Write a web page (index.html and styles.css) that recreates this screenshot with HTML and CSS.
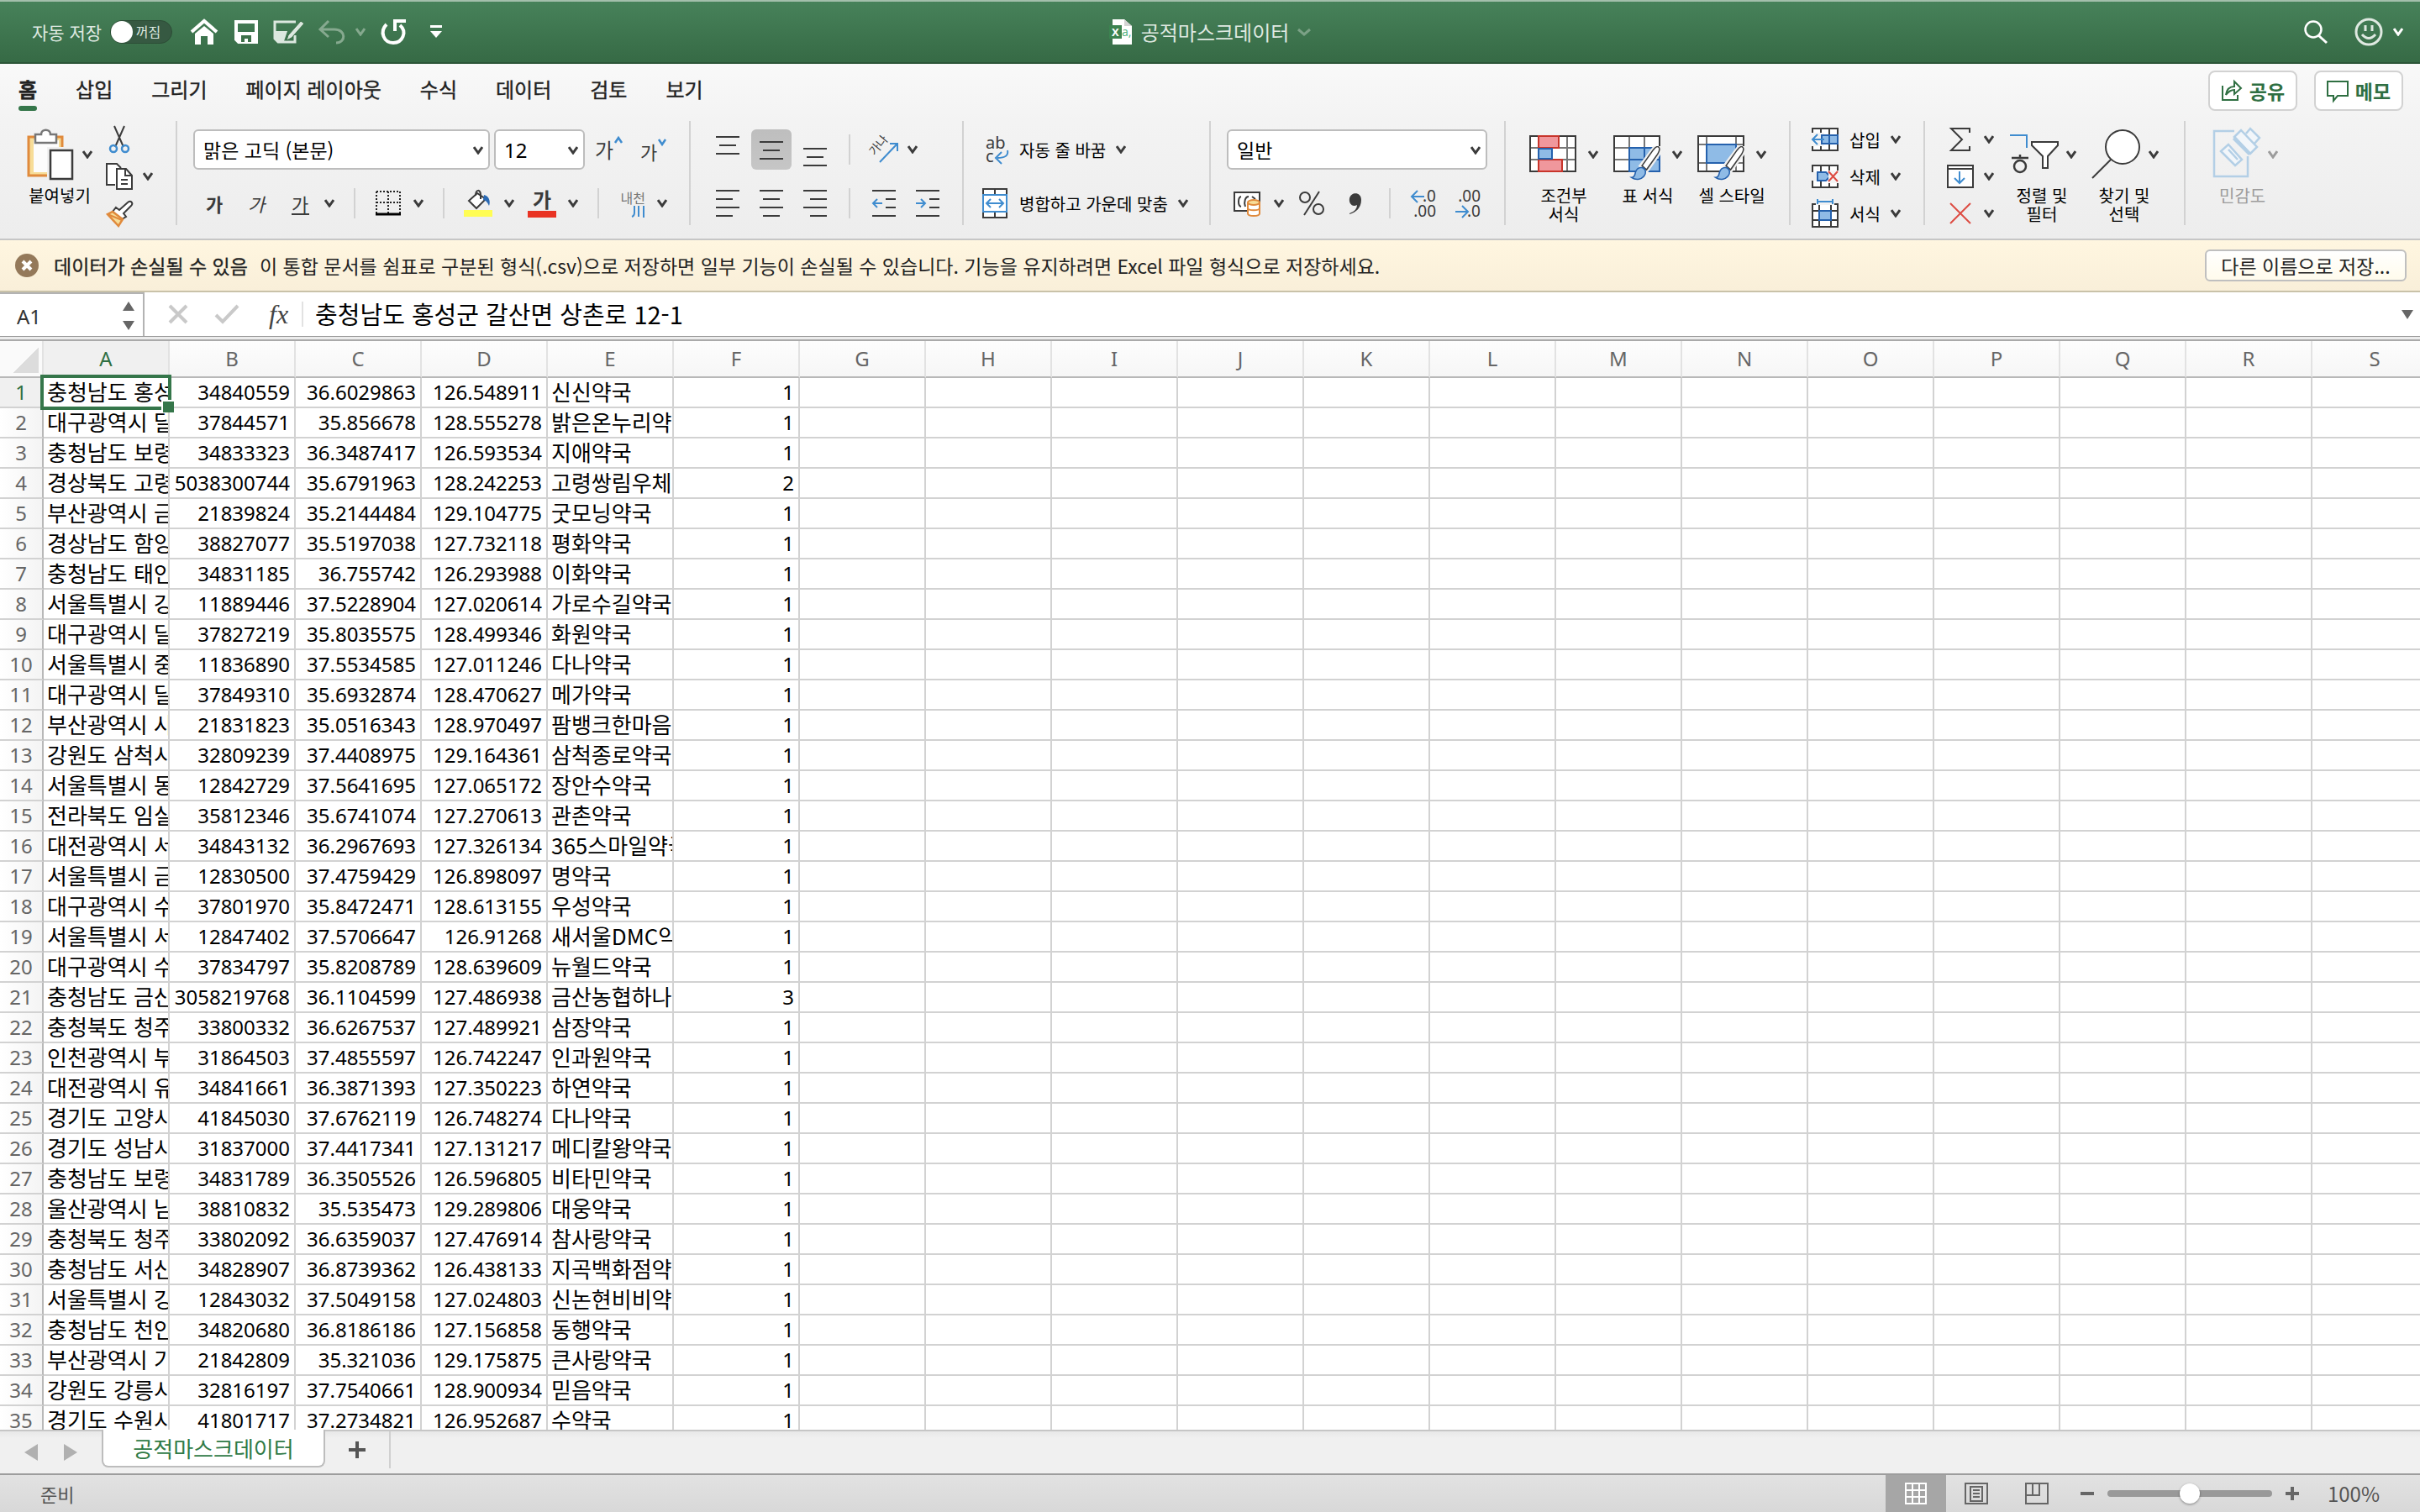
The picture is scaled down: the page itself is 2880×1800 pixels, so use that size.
FILE: index.html
```html
<!DOCTYPE html>
<html lang="ko">

<head>
    <meta charset="UTF-8">
    <meta name="viewport" content="width=device-width, initial-scale=1.0">
    <title>공적마스크데이터</title>
    <link rel="stylesheet" href="styles.css">
</head>

<body>

    <!-- shared icons -->
    <svg class="defs" width="0" height="0">
        <symbol id="caret" viewBox="0 0 12 10"><path d="M1 1 6 8 11 1" fill="none" stroke="currentColor" stroke-width="3"/></symbol>
        <symbol id="brush" viewBox="0 0 46 54">
            <path d="M43 1c4 3 2 7-1 12L25 37l-8-7L35 6c3-4 6-6 8-5z" fill="#fff" stroke="#f1f1f1" stroke-width="7"/>
            <path d="M43 1c3 2 2 6-1 11L25 36l-7-6L35 6c3-4 6-6 8-5z" fill="#fff" stroke="#3b3b3b" stroke-width="2"/>
            <path d="M19 33c5 2 6 8 2 13-5 6-13 6-19 2 5 0 5-4 6-8 2-6 6-8 11-7z" fill="#8fbbe6" stroke="#2561ad" stroke-width="2"/>
        </symbol>
    </svg>

    <header class="titlebar">
        <div class="quick">
            <label for="autosave">자동 저장</label>
            <span class="toggle"><input type="checkbox" id="autosave"><span>꺼짐</span></span>
            <button aria-label="홈"><svg width="32" height="30" viewBox="0 0 32 30"><path d="M1 15 16 2l15 13" fill="none" stroke="#fff" stroke-width="4"/><path d="M5 17 16 8l11 9v13h-7V20h-8v10H5z" fill="#fff"/></svg></button>
            <button aria-label="저장"><svg width="28" height="28" viewBox="0 0 28 28"><path d="M2 2h24v24H5l-3-3z" fill="none" stroke="#fff" stroke-width="4"/><path d="M3 14h22v12H3z" fill="#fff"/><path d="M8 18h12v8h-4v-4h-4v4H8z" fill="#3d7049"/></svg></button>
            <button aria-label="편집 저장"><svg width="38" height="30" viewBox="0 0 38 30"><path d="M27 3H2v20l4 4h20v-8" fill="none" stroke="#dce8df" stroke-width="3"/><path d="M3 14h14l-4 12H6l-3-3z" fill="#dce8df"/><path d="M33 2l4 3-15 17-6 3 2-6z" fill="#dce8df" stroke="#3d7049" stroke-width="1"/></svg></button>
            <button class="faded" aria-label="실행 취소"><svg width="32" height="28" viewBox="0 0 32 28"><path d="M12 1 2 11l10 9M3 11h16c14 0 14 16 2 16" fill="none" stroke="currentColor" stroke-width="3"/></svg><svg class="caret"><use href="#caret"/></svg></button>
            <button aria-label="다시 실행"><svg width="32" height="30" viewBox="0 0 32 30"><path d="M7 6C-2 15 4 28 15 28s17-13 8-21" fill="none" stroke="#fff" stroke-width="4"/><path d="M17 14V2h13" fill="none" stroke="#fff" stroke-width="4"/></svg></button>
            <button aria-label="사용자 지정"><svg width="16" height="16" viewBox="0 0 16 16"><path d="M1 0h14v3H1zM1 7h14l-7 8z" fill="#fff"/></svg></button>
        </div>
        <h1>
            <svg width="28" height="30" viewBox="0 0 28 30"><path d="M4 0h14l9 8v22H4z" fill="#fff"/><path d="M18 0v8h9" fill="#d4d4d4"/><rect y="7" width="15" height="16" fill="#3c8350"/><text x="3" y="20" class="logo-x">X</text><text x="15" y="20" class="logo-a">a,</text></svg>
            공적마스크데이터
            <svg width="16" height="10" viewBox="0 0 16 10"><path d="m1 2 7 6 7-6" fill="none" stroke="#7ba186" stroke-width="3"/></svg>
        </h1>
        <div class="title-tools">
            <button aria-label="검색"><svg width="28" height="28" viewBox="0 0 28 28"><circle cx="11" cy="11" r="9.500" fill="none" stroke="#fff" stroke-width="2.500"/><path d="m17 18 10 9" stroke="#fff" stroke-width="3"/></svg></button>
            <button aria-label="피드백"><svg width="34" height="34" viewBox="0 0 34 34"><circle cx="17" cy="17" r="15" fill="none" stroke="#dfe9e1" stroke-width="3"/><path d="M13 9v7M21 9v7M9 20q8 9 16 0" fill="none" stroke="#dfe9e1" stroke-width="3"/></svg><svg class="caret"><use href="#caret"/></svg></button>
        </div>
    </header>

    <nav class="tabs">
        <a href="#" class="active">홈</a>
        <a href="#">삽입</a>
        <a href="#">그리기</a>
        <a href="#">페이지 레이아웃</a>
        <a href="#">수식</a>
        <a href="#">데이터</a>
        <a href="#">검토</a>
        <a href="#">보기</a>
        <div class="share">
            <button><svg width="26" height="26" viewBox="0 0 26 26"><path d="M2 7v17h18v-6M6 18C7 11 11 8 16 8V2l8 8-8 7v-5c-4 0-7 2-10 6z" fill="none" stroke="#2f6f42" stroke-width="2"/></svg>공유</button>
            <button><svg width="26" height="26" viewBox="0 0 26 26"><path d="M1 2h24v17H13l-5 6v-6H1z" fill="none" stroke="#2f6f42" stroke-width="2"/></svg>메모</button>
        </div>
    </nav>

    <section class="ribbon">
        <div class="group clipboard">
            <button class="big">
                <span class="pic"><svg width="56" height="60" viewBox="0 0 56 60"><path d="M2 9h40v46H2z" fill="#f7dd98" stroke="#e08a3c" stroke-width="3"/><path d="M8 13h30v38H8z" fill="#fcfcfc"/><path d="M10 6h7c0-7 11-7 11 0h7v10H10z" fill="#fff" stroke="#777" stroke-width="2.500"/><path d="M24 21h32v39H24z" fill="#f1f1f1"/><path d="M28 25h26v34H28z" fill="#fff" stroke="#3b3b3b" stroke-width="2.500"/></svg><svg class="caret"><use href="#caret"/></svg></span>
                <span>붙여넣기</span>
            </button>
            <div class="stack">
                <button aria-label="잘라내기"><svg width="32" height="34" viewBox="0 0 32 34"><path d="m10 1 11 25M22 1 11 26" stroke="#3b3b3b" stroke-width="2"/><circle cx="9" cy="28" r="4" fill="none" stroke="#3f8ccf" stroke-width="2.500"/><circle cx="23" cy="28" r="4" fill="none" stroke="#3f8ccf" stroke-width="2.500"/></svg></button>
                <button class="split" aria-label="복사"><svg width="32" height="34" viewBox="0 0 32 34"><path d="M11 27H1V2h12l5 5" fill="#fff" stroke="#3b3b3b" stroke-width="2"/><path d="M13 8h11l7 8v16H13z" fill="#fff" stroke="#3b3b3b" stroke-width="2"/><path d="M23 8v8h8M18 21h8M18 26h8" fill="none" stroke="#3b3b3b" stroke-width="2"/></svg><svg class="caret"><use href="#caret"/></svg></button>
                <button aria-label="서식 복사"><svg width="32" height="32" viewBox="0 0 32 32"><path d="m12 9 4 3L26 3c4-3 7 1 4 4l-9 9 3 4-5 3-11-9z" fill="#fff" stroke="#3b3b3b" stroke-width="2"/><path d="m8 14 12 9-5 8L2 17z" fill="#f7dd98" stroke="#e08a3c" stroke-width="2.500"/><path d="m2 17 17 7" stroke="#e08a3c" stroke-width="2"/></svg></button>
            </div>
        </div>

        <div class="group font">
            <div class="row">
                <span class="dropdown font-name"><select aria-label="글꼴"><option>맑은 고딕 (본문)</option></select><svg class="caret"><use href="#caret"/></svg></span>
                <span class="dropdown font-size"><select aria-label="글꼴 크기"><option>12</option></select><svg class="caret"><use href="#caret"/></svg></span>
                <button class="resize grow" aria-label="글꼴 크게">가<svg class="caret"><path d="M2 8 6 2l4 6" fill="none" stroke="#3f8ccf" stroke-width="2.500"/></svg></button>
                <button class="resize" aria-label="글꼴 작게">가<svg class="caret"><path d="m2 2 4 6 4-6" fill="none" stroke="#3f8ccf" stroke-width="2.500"/></svg></button>
            </div>
            <div class="row">
                <button class="letter bold">가</button>
                <button class="letter italic">가</button>
                <button class="split first"><span class="under">가</span><svg class="caret"><use href="#caret"/></svg></button>
                <i class="sep"></i>
                <button class="split" aria-label="테두리"><svg width="32" height="32" viewBox="0 0 32 32"><path d="M2 2h28M2 15h28M2 2v26M16 2v26M30 2v26" stroke="#222" stroke-width="2" stroke-dasharray="2 2"/><path d="M1 29h30" stroke="#000" stroke-width="3"/></svg><svg class="caret"><use href="#caret"/></svg></button>
                <i class="sep"></i>
                <button class="split" aria-label="채우기 색"><svg width="34" height="34" viewBox="0 0 34 34"><path d="M16 5 6 14l9 9 11-11z" fill="#fff" stroke="#3b3b3b" stroke-width="2"/><path d="M14 8c0-8 6-8 6-1v5" fill="none" stroke="#3b3b3b" stroke-width="2"/><path d="M24 7c6 1 8 8 6 13-2-4-3-6-7-7z" fill="#2a69b3"/><path d="M0 25h34v8H0z" fill="#fffd54"/></svg><svg class="caret"><use href="#caret"/></svg></button>
                <button class="split gap" aria-label="글꼴 색"><span class="colored">가</span><svg class="caret"><use href="#caret"/></svg></button>
                <i class="sep"></i>
                <button class="split" aria-label="윗주"><span class="ruby">내천<svg width="16" height="14" viewBox="0 0 16 14"><path d="M3 0v8q0 4-3 5M8 0v13M14 0v14" fill="none" stroke="#3f8ccf" stroke-width="2"/></svg></span><svg class="caret"><use href="#caret"/></svg></button>
            </div>
        </div>

        <div class="group align">
            <div class="row">
                <button class="tool" aria-label="위쪽"><svg width="28" height="36" viewBox="0 0 28 36"><path d="M0 3h28M4 13h20M0 23h28"/></svg></button>
                <button class="tool pressed" aria-label="가운데"><svg width="28" height="36" viewBox="0 0 28 36"><path d="M0 9h28M4 19h20M0 29h28"/></svg></button>
                <button class="tool" aria-label="아래쪽"><svg width="28" height="36" viewBox="0 0 28 36"><path d="M0 17h28M4 27h20M0 37h28"/></svg></button>
                <i class="sep"></i>
                <button class="tool" aria-label="방향"><svg width="34" height="34" viewBox="0 0 34 34"><text transform="translate(6 25) rotate(-50)" class="tiny">가나</text><path class="blue" d="M12 32 32 11M24 10h9v9"/></svg></button>
                <svg class="caret"><use href="#caret"/></svg>
            </div>
            <div class="row">
                <button class="tool" aria-label="왼쪽 맞춤"><svg width="28" height="32" viewBox="0 0 28 32"><path d="M0 1h28M0 11h20M0 21h28M0 31h20"/></svg></button>
                <button class="tool" aria-label="가운데 맞춤"><svg width="28" height="32" viewBox="0 0 28 32"><path d="M0 1h28M4 11h20M0 21h28M4 31h20"/></svg></button>
                <button class="tool" aria-label="오른쪽 맞춤"><svg width="28" height="32" viewBox="0 0 28 32"><path d="M0 1h28M8 11h20M0 21h28M8 31h20"/></svg></button>
                <i class="sep"></i>
                <button class="tool" aria-label="내어쓰기"><svg width="28" height="32" viewBox="0 0 28 32"><path d="M0 1h28M16 11h12M16 21h12M0 31h28"/><path class="blue" d="M12 16H1M6 11l-5 5 5 5"/></svg></button>
                <button class="tool" aria-label="들여쓰기"><svg width="28" height="32" viewBox="0 0 28 32"><path d="M0 1h28M16 11h12M16 21h12M0 31h28"/><path class="blue" d="M0 16h11M6 11l5 5-5 5"/></svg></button>
            </div>
        </div>

        <div class="group wrap">
            <div class="row">
                <button class="wide"><svg width="34" height="36" viewBox="0 0 34 36"><text x="6" y="17" class="abc">ab</text><text x="6" y="33" class="abc">c</text><path class="blue" d="M32 19q2 9-12 9M25 21l-7 7 7 7"/></svg><span>자동 줄 바꿈</span><svg class="caret"><use href="#caret"/></svg></button>
            </div>
            <div class="row">
                <button class="wide"><svg width="34" height="36" viewBox="0 0 34 36"><path d="M3 1h28v34H3z" fill="#fff" stroke="#3b3b3b" stroke-width="2"/><path d="M17 1v7M17 28v7" stroke="#3b3b3b" stroke-width="2"/><path d="M3 8h28v20H3z" fill="#fff" stroke="#3f8ccf" stroke-width="2"/><path class="blue" d="M7 18h20M12 13l-5 5 5 5M22 13l5 5-5 5"/></svg><span>병합하고 가운데 맞춤</span><svg class="caret"><use href="#caret"/></svg></button>
            </div>
        </div>

        <div class="group number">
            <div class="row">
                <span class="dropdown format"><select aria-label="표시 형식"><option>일반</option></select><svg class="caret"><use href="#caret"/></svg></span>
            </div>
            <div class="row">
                <button class="split money" aria-label="통화"><svg width="34" height="32" viewBox="0 0 34 32"><path d="M1 3h30v22H1z" fill="#fff" stroke="#3b3b3b" stroke-width="2"/><path d="M9 8c-4 1-4 11 0 12M14 20c-2-6 0-12 4-12M22 8l4 3" fill="none" stroke="#3b3b3b" stroke-width="2"/><path d="M17 15v13c0 4 14 4 14 0V15" fill="#fff" stroke="#e08a3c" stroke-width="2"/><ellipse cx="24" cy="15" rx="7" ry="3" fill="#f7dd98" stroke="#e08a3c" stroke-width="2"/><path d="M17 22c1 3 13 3 14 0" fill="none" stroke="#e08a3c" stroke-width="2"/></svg><svg class="caret"><use href="#caret"/></svg></button>
                <button class="tool" aria-label="백분율"><svg width="32" height="30" viewBox="0 0 32 30"><circle cx="8" cy="8" r="6" fill="none"/><circle cx="24" cy="22" r="6" fill="none"/><path d="M25 1 7 29"/></svg></button>
                <button class="tool" aria-label="쉼표"><svg width="16" height="26" viewBox="0 0 16 26"><path d="M1 25q9-3 9-10C4 18 0 13 1 7 3-1 15-1 15 9c0 9-6 15-14 17z" class="solid"/></svg></button>
                <i class="sep"></i>
                <button class="tool" aria-label="자릿수 늘림"><svg width="34" height="36" viewBox="0 0 34 36"><text x="31" y="16" class="digits">.0</text><text x="31" y="34" class="digits">.00</text><path class="blue" d="M17 10H2M9 3l-7 7 7 7"/></svg></button>
                <button class="tool" aria-label="자릿수 줄임"><svg width="34" height="36" viewBox="0 0 34 36"><text x="32" y="16" class="digits">.00</text><text x="32" y="34" class="digits">.0</text><path class="blue" d="M2 28h15M10 21l7 7-7 7"/></svg></button>
            </div>
        </div>

        <div class="group styles">
            <button class="big">
                <span class="pic"><svg width="62" height="60" viewBox="0 0 62 60"><path d="M1 8h54v42H1z" fill="#fff"/><path d="M1 22h54M1 36h54M11 8v42M45 8v42" stroke="#777" stroke-width="2"/><path d="M1 8h54v42H1z" fill="none" stroke="#3b3b3b" stroke-width="2"/><path d="M11 8h24v14H11zM11 36h28v14H11z" fill="#f0979c" stroke="#c8352b" stroke-width="2"/><path d="M11 23h16v12H11z" fill="#8fbbe6" stroke="#2561ad" stroke-width="2"/></svg><svg class="caret"><use href="#caret"/></svg></span>
                <span>조건부<br>서식</span>
            </button>
            <button class="big">
                <span class="pic"><svg width="62" height="60" viewBox="0 0 62 60"><path d="M1 8h54v42H1z" fill="#fff"/><path d="M19 22h36v28H19z" fill="#8fbbe6"/><path d="M1 22h18M1 36h18M19 8v14M37 8v14" stroke="#777" stroke-width="2"/><path d="M55 22V8H1v42h18" fill="none" stroke="#3b3b3b" stroke-width="2"/><path d="M19 22h36v28H19zM19 36h36M37 22v28" fill="none" stroke="#2561ad" stroke-width="2"/><use href="#brush" x="15" y="20" width="46" height="42"/></svg><svg class="caret"><use href="#caret"/></svg></span>
                <span>표 서식</span>
            </button>
            <button class="big">
                <span class="pic"><svg width="62" height="60" viewBox="0 0 62 60"><path d="M1 8h54v42H1z" fill="#fff"/><path d="M1 18h54M1 40h54M11 8v42M46 8v42" stroke="#777" stroke-width="2"/><path d="M1 8h54v42H1z" fill="none" stroke="#3b3b3b" stroke-width="2"/><path d="M11 18h35v22H11z" fill="#8fbbe6" stroke="#2561ad" stroke-width="2"/><use href="#brush" x="15" y="20" width="46" height="42"/></svg><svg class="caret"><use href="#caret"/></svg></span>
                <span>셀 스타일</span>
            </button>
        </div>

        <div class="group cells">
            <button class="wide"><svg width="34" height="30" viewBox="0 0 34 30"><path d="M2 2h30v26H2zM2 10h30M2 20h30M12 2v26M22 2v26" fill="#fff" stroke="#3b3b3b" stroke-width="2"/><path d="M0 7h16v16H0z" fill="#f4f4f4"/><path d="M13 10h19v10H13zM22 10v10" fill="#8fbbe6" stroke="#2561ad" stroke-width="2"/><path class="blue" d="M16 15H2M8 9l-6 6 6 6"/></svg><span>삽입</span><svg class="caret"><use href="#caret"/></svg></button>
            <button class="wide"><svg width="34" height="30" viewBox="0 0 34 30"><path d="M2 10V2h30v8M2 20v8h30v-8M12 2v26M22 2v26" fill="#fff" stroke="#3b3b3b" stroke-width="2"/><path d="M8 10h10l5 5-5 5H8z" fill="#8fbbe6" stroke="#2561ad" stroke-width="2"/><path d="M21 8h13v15H21z" fill="#f4f4f4"/><path d="m21 9 11 12M32 9 21 21" stroke="#dd4b42" stroke-width="2"/></svg><span>삭제</span><svg class="caret"><use href="#caret"/></svg></button>
            <button class="wide"><svg width="34" height="34" viewBox="0 0 34 34"><path d="M2 6h30v27H2zM2 14h30M2 25h30M10 6v27M24 6v27" fill="#fff" stroke="#3b3b3b" stroke-width="2"/><path d="M6 0h22v7H6z" fill="#f2f2f2"/><path d="M10 14h14v11H10z" fill="#8fbbe6" stroke="#2561ad" stroke-width="2"/><path class="blue" d="M8 3h18M8 0v6M26 0v6"/></svg><span>서식</span><svg class="caret"><use href="#caret"/></svg></button>
        </div>

        <div class="group editing">
            <div class="stack">
                <button class="split" aria-label="합계"><svg width="32" height="30" viewBox="0 0 32 30"><path d="M27 7V2H5l13 13L5 28h22v-5" fill="none" stroke="#3b3b3b" stroke-width="2"/></svg><svg class="caret"><use href="#caret"/></svg></button>
                <button class="split" aria-label="채우기"><svg width="32" height="30" viewBox="0 0 32 30"><path d="M1 2h30v26H1zM1 6h30" fill="#fff" stroke="#3b3b3b" stroke-width="2"/><path class="blue" d="M15 9v14M9 17l6 6 6-6"/></svg><svg class="caret"><use href="#caret"/></svg></button>
                <button class="split" aria-label="지우기"><svg width="32" height="30" viewBox="0 0 32 30"><path d="m4 3 24 24M28 3 4 27" stroke="#dd4b42" stroke-width="2"/></svg><svg class="caret"><use href="#caret"/></svg></button>
            </div>
            <button class="big">
                <span class="pic"><svg width="62" height="60" viewBox="0 0 62 60"><path class="blue" d="M3 7h20v15"/><path d="M5 34h20M15 30v4" stroke="#3b3b3b" stroke-width="2.500"/><circle cx="15" cy="44" r="7" fill="none" stroke="#3b3b3b" stroke-width="2.500"/><path d="M29 15h31v4L48 32v14h-6V32L29 19z" fill="#fff" stroke="#3b3b3b" stroke-width="2"/></svg><svg class="caret"><use href="#caret"/></svg></span>
                <span>정렬 및<br>필터</span>
            </button>
            <button class="big">
                <span class="pic"><svg width="62" height="60" viewBox="0 0 62 60"><circle cx="39" cy="21" r="20" fill="#fff" stroke="#3b3b3b" stroke-width="2"/><path d="M25 36 3 58" stroke="#3b3b3b" stroke-width="2"/></svg><svg class="caret"><use href="#caret"/></svg></span>
                <span>찾기 및<br>선택</span>
            </button>
        </div>

        <div class="group sensitivity">
            <button class="big" disabled>
                <span class="pic"><svg width="58" height="60" viewBox="0 0 58 60"><path d="M26 2H2v54h40V32" fill="none" stroke="#b3cfe6" stroke-width="2.500"/><path d="M19 18 35 36 27 43 10 26zM19 24 30 36M26 9l8-8 19 20-8 8zM40 5l5-6 11 11-7 8" fill="#f2f6fa" stroke="#b3cfe6" stroke-width="2.500"/><path d="m24 12 19 19 3-3-19-20z" fill="#b3cfe6"/></svg><svg class="caret"><use href="#caret"/></svg></span>
                <span>민감도</span>
            </button>
        </div>
    </section>

    <div class="message">
        <button class="close" aria-label="닫기"><svg width="28" height="28" viewBox="0 0 28 28"><circle cx="14" cy="14" r="14" fill="#94795a"/><path d="m9 9 10 10M19 9 9 19" stroke="#fff" stroke-width="4"/></svg></button>
        <strong>데이터가 손실될 수 있음</strong>
        <span>이 통합 문서를 쉼표로 구분된 형식(.csv)으로 저장하면 일부 기능이 손실될 수 있습니다. 기능을 유지하려면 Excel 파일 형식으로 저장하세요.</span>
        <button class="save-as">다른 이름으로 저장...</button>
    </div>

    <div class="formula">
        <div class="namebox">
            <input type="text" value="A1" aria-label="이름 상자">
            <svg width="14" height="34" viewBox="0 0 14 34"><path d="M7 0 14 11H0zM7 34 0 23h14z" fill="#666"/></svg>
        </div>
        <button aria-label="취소"><svg width="24" height="24" viewBox="0 0 24 24"><path d="m2 2 20 20M22 2 2 22" stroke="#c9c9c9" stroke-width="4"/></svg></button>
        <button aria-label="입력"><svg width="30" height="24" viewBox="0 0 30 24"><path d="m2 13 8 8L28 2" fill="none" stroke="#c9c9c9" stroke-width="4"/></svg></button>
        <button class="fx">fx</button>
        <input class="content" type="text" value="충청남도 홍성군 갈산면 상촌로 12-1" aria-label="수식">
        <svg width="14" height="11" viewBox="0 0 14 11"><path d="M0 0h14L7 11z" fill="#666"/></svg>
    </div>
    <div class="splitter"></div>

    <main class="grid">
        <table>
            <thead><tr id="columns"><th class="corner"></th></tr></thead>
            <tbody id="rows"></tbody>
        </table>
    </main>

    <div class="sheets">
        <button class="arrow" aria-label="이전 시트"><svg width="16" height="20" viewBox="0 0 16 20"><path d="M16 0v20L0 10z" fill="#b0b0b0"/></svg></button>
        <button class="arrow" aria-label="다음 시트"><svg width="16" height="20" viewBox="0 0 16 20"><path d="M0 0v20l16-10z" fill="#b0b0b0"/></svg></button>
        <button class="sheet">공적마스크데이터</button>
        <button class="add" aria-label="시트 추가"><svg width="22" height="22" viewBox="0 0 22 22"><path d="M11 1v20M1 11h20" stroke="#555" stroke-width="4"/></svg></button>
    </div>

    <footer class="status">
        <span class="ready">준비</span>
        <button class="view current" aria-label="기본 보기"><svg width="28" height="28" viewBox="0 0 28 28"><path d="M2 2h24v24H2zM2 10h24M2 18h24M10 2v24M18 2v24" fill="none" stroke="#fff" stroke-width="2"/></svg></button>
        <button class="view" aria-label="페이지 레이아웃 보기"><svg width="28" height="28" viewBox="0 0 28 28"><path d="M1 2h26v24H1zM7 6h14v17H7z" fill="none" stroke="#666" stroke-width="2"/><path d="M10 10h8M10 14h8M10 18h8" stroke="#666" stroke-width="2"/></svg></button>
        <button class="view" aria-label="페이지 나누기 보기"><svg width="28" height="28" viewBox="0 0 28 28"><path d="M1 2h26v24H1zM1 16h16V2M9 2v14" fill="none" stroke="#666" stroke-width="2"/></svg></button>
        <button class="zoom-btn" aria-label="축소"><svg width="16" height="16" viewBox="0 0 16 16"><path d="M0 8h16" stroke="#666" stroke-width="4"/></svg></button>
        <input type="range" min="0" max="200" value="100" aria-label="확대/축소">
        <button class="zoom-btn" aria-label="확대"><svg width="16" height="16" viewBox="0 0 16 16"><path d="M0 8h16M8 0v16" stroke="#666" stroke-width="4"/></svg></button>
        <span class="percent">100%</span>
    </footer>

    <script>
        const columns = "ABCDEFGHIJKLMNOPQRS".split("");

        const data = [
            ["충청남도 홍성군 갈산면 상촌로 12-1", "34840559", "36.6029863", "126.548911", "신신약국", "1"],
            ["대구광역시 달서구", "37844571", "35.856678", "128.555278", "밝은온누리약국", "1"],
            ["충청남도 보령시", "34833323", "36.3487417", "126.593534", "지애약국", "1"],
            ["경상북도 고령군", "5038300744", "35.6791963", "128.242253", "고령쌍림우체국", "2"],
            ["부산광역시 금정구", "21839824", "35.2144484", "129.104775", "굿모닝약국", "1"],
            ["경상남도 함양군", "38827077", "35.5197038", "127.732118", "평화약국", "1"],
            ["충청남도 태안군", "34831185", "36.755742", "126.293988", "이화약국", "1"],
            ["서울특별시 강남구", "11889446", "37.5228904", "127.020614", "가로수길약국", "1"],
            ["대구광역시 달서구", "37827219", "35.8035575", "128.499346", "화원약국", "1"],
            ["서울특별시 중구", "11836890", "37.5534585", "127.011246", "다나약국", "1"],
            ["대구광역시 달성군", "37849310", "35.6932874", "128.470627", "메가약국", "1"],
            ["부산광역시 사하구", "21831823", "35.0516343", "128.970497", "팜뱅크한마음약국", "1"],
            ["강원도 삼척시", "32809239", "37.4408975", "129.164361", "삼척종로약국", "1"],
            ["서울특별시 동대문구", "12842729", "37.5641695", "127.065172", "장안수약국", "1"],
            ["전라북도 임실군", "35812346", "35.6741074", "127.270613", "관촌약국", "1"],
            ["대전광역시 서구", "34843132", "36.2967693", "127.326134", "365스마일약국", "1"],
            ["서울특별시 금천구", "12830500", "37.4759429", "126.898097", "명약국", "1"],
            ["대구광역시 수성구", "37801970", "35.8472471", "128.613155", "우성약국", "1"],
            ["서울특별시 서대문구", "12847402", "37.5706647", "126.91268", "새서울DMC약국", "1"],
            ["대구광역시 수성구", "37834797", "35.8208789", "128.639609", "뉴월드약국", "1"],
            ["충청남도 금산군", "3058219768", "36.1104599", "127.486938", "금산농협하나로마트", "3"],
            ["충청북도 청주시", "33800332", "36.6267537", "127.489921", "삼장약국", "1"],
            ["인천광역시 부평구", "31864503", "37.4855597", "126.742247", "인과원약국", "1"],
            ["대전광역시 유성구", "34841661", "36.3871393", "127.350223", "하연약국", "1"],
            ["경기도 고양시", "41845030", "37.6762119", "126.748274", "다나약국", "1"],
            ["경기도 성남시", "31837000", "37.4417341", "127.131217", "메디칼왕약국", "1"],
            ["충청남도 보령시", "34831789", "36.3505526", "126.596805", "비타민약국", "1"],
            ["울산광역시 남구", "38810832", "35.535473", "129.289806", "대웅약국", "1"],
            ["충청북도 청주시", "33802092", "36.6359037", "127.476914", "참사랑약국", "1"],
            ["충청남도 서산시", "34828907", "36.8739362", "126.438133", "지곡백화점약국", "1"],
            ["서울특별시 강남구", "12843032", "37.5049158", "127.024803", "신논현비비약국", "1"],
            ["충청남도 천안시", "34820680", "36.8186186", "127.156858", "동행약국", "1"],
            ["부산광역시 기장군", "21842809", "35.321036", "129.175875", "큰사랑약국", "1"],
            ["강원도 강릉시", "32816197", "37.7540661", "128.900934", "믿음약국", "1"],
            ["경기도 수원시", "41801717", "37.2734821", "126.952687", "수약국", "1"]
        ];

        columns.forEach((name, i) => {
            const th = document.createElement("th");
            th.textContent = name;
            if (i === 0) th.className = "on";
            document.getElementById("columns").appendChild(th);
        });

        data.forEach((values, r) => {
            const tr = document.createElement("tr");
            const head = document.createElement("th");
            head.textContent = r + 1;
            if (r === 0) head.className = "on";
            tr.appendChild(head);
            columns.forEach((name, c) => {
                const td = document.createElement("td");
                if (values[c]) {
                    const text = document.createElement("div");
                    text.textContent = values[c];
                    text.className = c === 0 || c === 4 ? "text" : "num";
                    td.appendChild(text);
                }
                if (r === 0 && c === 0) td.className = "selected";
                tr.appendChild(td);
            });
            document.getElementById("rows").appendChild(tr);
        });
    </script>

</body>

</html>
```
FILE: styles.css
```css
* {
    box-sizing: border-box;
}

body {
    margin: 0;
    height: 100vh;
    display: flex;
    flex-direction: column;
    overflow: hidden;
    font-family: "Noto Sans CJK KR", sans-serif;
    font-size: 20px;
    color: #000;
    background: #fff;
}

button {
    display: flex;
    align-items: center;
    justify-content: center;
    padding: 0;
    border: 0;
    background: none;
    color: inherit;
    font: inherit;
    white-space: nowrap;
}

input,
select {
    font: inherit;
    color: inherit;
    margin: 0;
}

svg {
    display: block;
    flex: none;
    overflow: visible;
}

.defs {
    position: absolute;
}

.caret {
    width: 12px;
    height: 10px;
    color: #3b3b3b;
}

/* title bar */
.titlebar {
    display: grid;
    grid-template-columns: 1fr auto 1fr;
    align-items: center;
    height: 76px;
    padding: 0 20px;
    border-top: 2px solid #a3bfab;
    border-bottom: 2px solid #2c5538;
    background: linear-gradient(#47825a, #366a45);
    color: #dfe9e1;
}

.titlebar .caret {
    color: #fff;
}

.quick {
    display: flex;
    align-items: center;
    gap: 26px;
    padding-left: 18px;
    font-size: 21px;
}

.quick label {
    margin-right: -16px;
}

.toggle {
    position: relative;
    display: flex;
    margin-right: -4px;
}

.toggle input {
    appearance: none;
    width: 74px;
    height: 28px;
    border-radius: 14px;
    background: #365942;
    border: 1px solid #2c4d36;
}

.toggle input::before {
    content: "";
    display: block;
    width: 26px;
    height: 26px;
    border-radius: 50%;
    background: #fff;
}

.toggle span {
    position: absolute;
    right: 14px;
    top: 0;
    font-size: 16px;
    line-height: 26px;
    pointer-events: none;
}

.quick button {
    gap: 12px;
}

.faded,
.quick .faded .caret {
    color: #86a98f;
}

.quick button:nth-of-type(2) {
    margin-left: -6px;
}

.quick button:nth-of-type(3),
.quick button:nth-of-type(5) {
    margin-left: -8px;
}

.quick button:nth-of-type(4) {
    margin-left: -10px;
}

.titlebar h1 {
    display: flex;
    align-items: center;
    gap: 10px;
    margin: 0;
    font-size: 24px;
    font-weight: normal;
    line-height: 36px;
}

.logo-x {
    font: bold 13px "Noto Sans", sans-serif;
    fill: #fff;
}

.logo-a {
    font: 14px "Noto Sans", sans-serif;
    fill: #55b584;
}

.title-tools {
    display: flex;
    justify-content: flex-end;
    gap: 32px;
}

.title-tools button {
    gap: 12px;
}

/* ribbon tabs */
.tabs {
    display: flex;
    align-items: flex-start;
    gap: 46px;
    height: 68px;
    padding: 8px 20px 0 22px;
    background: linear-gradient(#f9f9f9, #f3f3f3);
    font-size: 24px;
}

.tabs a {
    padding-top: 4px;
    color: #222;
    text-decoration: none;
    line-height: 36px;
    -webkit-text-stroke: 0.4px #222;
}

.tabs a.active {
    font-weight: bold;
}

.tabs a.active::after {
    content: "";
    display: block;
    height: 6px;
    margin-top: 2px;
    border-radius: 3px;
    background: #35764a;
}

.share {
    display: flex;
    gap: 20px;
    margin-left: auto;
}

.share button {
    gap: 8px;
    width: 106px;
    height: 48px;
    border: 2px solid #d2d2d2;
    border-radius: 8px;
    background: #fff;
    color: #2f6f42;
    font-weight: bold;
    font-size: 23px;
}

/* ribbon */
.ribbon {
    display: flex;
    height: 142px;
    padding-bottom: 16px;
    border-bottom: 2px solid #c6c6c6;
    background: linear-gradient(#f3f3f3, #ededed);
}

.group {
    display: flex;
    flex-direction: column;
    flex: none;
    gap: 16px;
    padding-top: 10px;
    border-right: 2px solid #d2d2d2;
}

.row {
    display: flex;
    align-items: center;
    height: 48px;
}

.sep {
    width: 2px;
    height: 36px;
    margin: 0 23px;
    background: #d2d2d2;
}

.split {
    gap: 14px;
}

.stack {
    display: flex;
    flex-direction: column;
    align-items: flex-start;
    margin-top: -10px;
}

.stack button {
    flex: none;
    height: 44px;
}

.big {
    flex-direction: column;
    justify-content: flex-start;
    line-height: 22px;
}

.big .pic {
    display: flex;
    align-items: center;
    gap: 8px;
    height: 60px;
    margin-bottom: 8px;
}

.wide {
    gap: 12px;
}

.clipboard {
    flex-direction: row;
    gap: 16px;
    width: 211px;
    padding-left: 32px;
}

.clipboard .big .pic {
    gap: 10px;
}

.clipboard .stack .split {
    gap: 12px;
}

.font {
    width: 611px;
    padding-left: 19px;
}

.dropdown {
    position: relative;
    display: block;
    height: 48px;
}

.dropdown select {
    appearance: none;
    width: 100%;
    height: 48px;
    padding: 0 10px;
    border: 2px solid #bdbdbd;
    border-radius: 6px;
    background: #fff;
    font-size: 23px;
}

.dropdown .caret {
    position: absolute;
    right: 8px;
    top: 20px;
}

.font-name {
    width: 353px;
    margin-right: 5px;
}

.font-size {
    width: 108px;
}

.font-size select {
    font-family: "Noto Sans", sans-serif;
    font-size: 24px;
}

.resize {
    align-items: flex-start;
    margin-left: 12px;
    padding-top: 4px;
    font-size: 22px;
    line-height: 32px;
    color: #3b3b3b;
}

.resize.grow {
    padding-top: 0;
    font-size: 24px;
    margin-right: 8px;
}

.letter {
    width: 50px;
    height: 48px;
    font-size: 22px;
    color: #3b3b3b;
}

.bold {
    font-weight: bold;
}

.italic {
    font-style: italic;
}

.first {
    margin-left: 12px;
}

.under {
    width: 30px;
    text-align: center;
    font-size: 22px;
    line-height: 28px;
    color: #3b3b3b;
    background: linear-gradient(#3b3b3b, #3b3b3b) center bottom / 21px 2px no-repeat;
}

.gap {
    margin-left: 16px;
}

.colored {
    width: 34px;
    padding-bottom: 2px;
    border-bottom: 8px solid #e93323;
    font-size: 24px;
    font-weight: bold;
    line-height: 24px;
    color: #3b3b3b;
}

.ruby {
    display: flex;
    flex-direction: column;
    align-items: flex-end;
    width: 32px;
    font-size: 16px;
    line-height: 20px;
    color: #777;
}

.align {
    width: 325px;
    padding-left: 20px;
}

.align .row,
.number .row {
    gap: 4px;
}

.align .sep,
.number .sep {
    margin: 0 12px;
}

.tool {
    width: 48px;
    height: 48px;
}

.tool svg {
    fill: none;
    stroke: #3b3b3b;
    stroke-width: 2px;
}

.tool text {
    fill: #3b3b3b;
    stroke: none;
}

.tool .solid {
    fill: #3b3b3b;
    stroke: none;
}

.blue {
    fill: none;
    stroke: #3f8ccf;
    stroke-width: 2px;
}

.pressed {
    border-radius: 6px;
    background: linear-gradient(#bebebe, #c6c6c6);
}

.tiny {
    font-size: 14px;
}

.abc {
    font: 20px "Noto Sans", sans-serif;
    fill: #3b3b3b;
}

.digits {
    font: 19px "Noto Sans", sans-serif;
    text-anchor: end;
}

.wrap {
    width: 294px;
    padding-left: 20px;
}

.number {
    width: 351px;
    padding-left: 19px;
}

.format {
    width: 310px;
}

.money {
    margin: 0 5px 0 8px;
}

.styles,
.editing {
    flex-direction: row;
}

.styles {
    gap: 18px;
    width: 339px;
    padding-left: 28px;
}

.cells {
    gap: 0;
    width: 160px;
    padding: 0 0 0 24px;
}

.cells .wide {
    flex: none;
    height: 44px;
    justify-content: flex-start;
}

.editing {
    gap: 16px;
    width: 310px;
    padding-left: 26px;
}

.editing .stack .split {
    gap: 12px;
}

.sensitivity {
    border: 0;
    padding-left: 32px;
}

.sensitivity .big {
    align-items: flex-start;
}

.sensitivity .big,
.sensitivity .caret {
    color: #9c9c9c;
}

.sensitivity .big > span:last-child {
    padding-left: 8px;
}

/* message bar */
.message {
    display: flex;
    align-items: center;
    height: 62px;
    padding: 0 16px 0 18px;
    border-bottom: 2px solid #c9c2a9;
    background: linear-gradient(#fff6e0, #f9efd9);
    font-size: 23px;
    line-height: 32px;
    color: #222;
    white-space: nowrap;
}

.message strong {
    margin: 0 14px 0 18px;
    font-weight: normal;
    -webkit-text-stroke: 0.3px #222;
}

.save-as {
    width: 240px;
    height: 38px;
    margin-left: auto;
    border: 2px solid #bfbfbf;
    border-radius: 6px;
    background: linear-gradient(#fff, #fffbec);
}

/* formula bar */
.formula {
    display: flex;
    align-items: center;
    height: 52px;
    padding-right: 8px;
}

.namebox {
    display: flex;
    align-items: center;
    justify-content: space-between;
    width: 172px;
    height: 52px;
    padding: 2px 10px 0 20px;
    margin-right: 28px;
    border: solid #b3b3b3;
    border-width: 2px 2px 0 0;
}

.namebox input {
    width: 100px;
    padding: 0;
    border: 0;
    font-family: "Noto Sans", sans-serif;
    font-size: 24px;
    color: #333;
}

.formula button {
    margin-right: 31px;
}

.formula .fx {
    padding: 0 16px 0 4px;
    margin-right: 0;
    border-right: 2px solid #e2e2e2;
    font: italic 32px/30px "Liberation Serif", serif;
    color: #444;
}

.formula .content {
    flex: 1;
    height: 40px;
    padding: 0 0 2px 14px;
    border: 0;
    font-size: 29px;
}

.splitter {
    height: 6px;
    border-top: 1px solid #999;
    border-bottom: 2px solid #aaa;
    background: #ececec;
}

/* cells */
.grid {
    flex: 1;
    min-height: 0;
    overflow: hidden;
    border-bottom: 2px solid #c6c6c6;
}

table {
    width: 2902px;
    table-layout: fixed;
    border-collapse: separate;
    border-spacing: 0;
    font-family: "Noto Sans", sans-serif;
    font-size: 24px;
}

th,
td {
    height: 36px;
    padding: 0;
    border: solid #d2d2d2;
    border-width: 0 2px 2px 0;
    line-height: 34px;
}

th {
    font-weight: normal;
    color: #666;
}

thead th {
    width: 150px;
    height: 44px;
    line-height: 42px;
    border-color: #e2e2e2;
    border-bottom-color: #b8b8b8;
    background: linear-gradient(#fdfdfd, #f6f6f6);
}

thead .corner {
    width: 52px;
    background: linear-gradient(to bottom right, transparent 50%, #dcdcdc 50%) 16px 8px / 30px 30px no-repeat, #fafafa;
}

tbody th {
    border-right-color: #b8b8b8;
    background: linear-gradient(to right, #fff, #f4f4f4);
}

th.on {
    color: #2f6f42;
    background: #f0f0f0;
}

td div {
    height: 34px;
    overflow: hidden;
    white-space: nowrap;
}

.text {
    padding-left: 4px;
    font-family: "Noto Sans CJK KR", sans-serif;
    font-size: 26px;
    line-height: 32px;
}

.num {
    padding-right: 5px;
    text-align: right;
}

.selected {
    position: relative;
}

.selected::before {
    content: "";
    position: absolute;
    inset: -4px;
    border: 4px solid #35764a;
}

.selected::after {
    content: "";
    position: absolute;
    right: -7px;
    bottom: -7px;
    width: 13px;
    height: 13px;
    border: solid #fff;
    border-width: 2px 0 0 2px;
    background: #35764a;
}

/* sheet tabs */
.sheets {
    display: flex;
    align-items: flex-start;
    height: 50px;
    padding-left: 29px;
    background: linear-gradient(#e8e8e8, #f0f0f0 8px);
}

.arrow {
    height: 50px;
    margin-right: 31px;
}

.arrow + .arrow {
    margin-right: 29px;
}

.sheet {
    width: 266px;
    height: 45px;
    margin-top: -2px;
    border: 2px solid #bdbdbd;
    border-top: 0;
    border-radius: 0 0 8px 8px;
    background: #fff;
    color: #2f7a46;
    font-size: 26px;
}

.add {
    width: 78px;
    height: 44px;
    border-right: 2px solid #d0d0d0;
}

/* status bar */
.status {
    display: flex;
    align-items: center;
    height: 46px;
    padding: 0 48px;
    border-top: 2px solid #9d9d9d;
    background: linear-gradient(#e2e2e2, #d8d8d8);
    color: #555;
    font-size: 22px;
    line-height: 30px;
}

.ready {
    margin-right: auto;
}

.view {
    width: 72px;
    height: 44px;
}

.view.current {
    background: #a6a6a6;
}

.zoom-btn {
    margin: 0 16px;
}

.status input {
    appearance: none;
    width: 196px;
    height: 8px;
    border-radius: 4px;
    background: #999;
}

.status input::-webkit-slider-thumb {
    appearance: none;
    width: 24px;
    height: 24px;
    border-radius: 50%;
    background: #fff;
    box-shadow: 0 1px 3px rgba(0, 0, 0, 0.4);
}

.percent {
    margin-left: 18px;
    font-size: 24px;
}
```
